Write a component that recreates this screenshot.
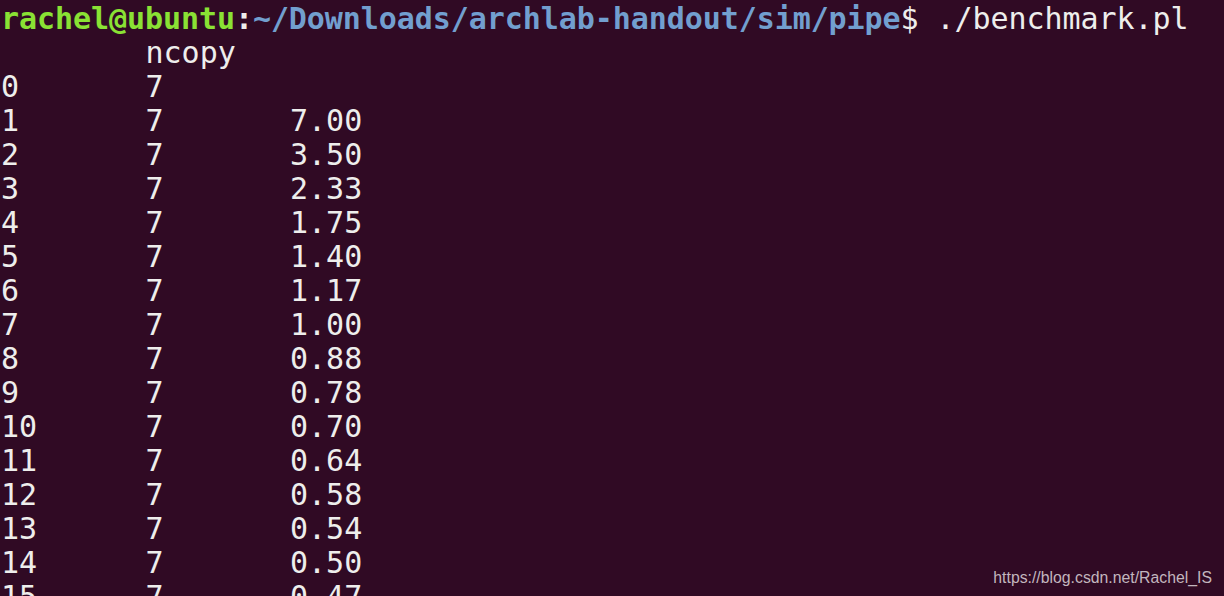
import React from "react";

const rows: [string, string][] = [
  ["1", "7.00"],
  ["2", "3.50"],
  ["3", "2.33"],
  ["4", "1.75"],
  ["5", "1.40"],
  ["6", "1.17"],
  ["7", "1.00"],
  ["8", "0.88"],
  ["9", "0.78"],
  ["10", "0.70"],
  ["11", "0.64"],
  ["12", "0.58"],
  ["13", "0.54"],
  ["14", "0.50"],
  ["15", "0.47"],
];

function pad(s: string, n: number) {
  return s + " ".repeat(Math.max(0, n - s.length));
}

export default function App() {
  return (
    <div className="relative w-[1224px] h-[596px] overflow-hidden bg-[#300a24]">
      <div
        className="pt-[2px] pl-[1px] text-[30px] leading-[34px] text-[#eeeeec] whitespace-pre"
        style={{ fontFamily: '"DejaVu Sans Mono", monospace' }}
      >
        <div className="tracking-[-0.07px]">
          <span className="font-bold text-[#8ae234]">rachel@ubuntu</span>
          <span className="font-bold">:</span>
          <span className="font-bold text-[#729fcf]">~/Downloads/archlab-handout/sim/pipe</span>
          <span>$ ./benchmark.pl</span>
        </div>
        <div>{"        ncopy"}</div>
        <div>{pad("0", 8) + "7"}</div>
        {rows.map(([n, v]) => (
          <div key={n}>{pad(n, 8) + pad("7", 8) + v}</div>
        ))}
      </div>
      <div
        className="absolute right-[12px] top-[568px] text-[15.8px] leading-[20px] text-[#c2b6be]"
        style={{ fontFamily: '"Liberation Sans", Arial, sans-serif' }}
      >
        https://blog.csdn.net/Rachel_IS
      </div>
    </div>
  );
}
